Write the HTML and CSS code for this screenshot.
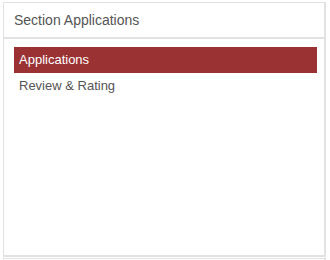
FILE: index.html
```html
<!DOCTYPE html>
<html lang="en">
<head>
  <meta charset="UTF-8">
  <title>Section Applications</title>
  <link rel="stylesheet" href="styles.css">
</head>
<body>
  <div class="panel">
    <div class="panel-heading">Section Applications</div>
    <ul class="nav-list">
      <li class="active">Applications</li>
      <li>Review &amp; Rating</li>
    </ul>
  </div>
  <div class="panel panel-next"></div>
</body>
</html>
```

FILE: styles.css
```css
body {
  margin: 0;
  padding: 2px 4px 0 3px;
  height: 258px;
  overflow: hidden;
  font-family: "Liberation Sans", Arial, sans-serif;
  background-color: #fff;
  color: #555;
}
.panel {
  border: 1px solid #e2e2e2;
  border-width: 1px 2px 2px 1px;
  height: 252px;
}
.panel-heading {
  height: 34px;
  line-height: 35px;
  padding: 0 10px;
  font-size: 14px;
  border-bottom: 2px solid #e2e2e2;
}
.nav-list {
  list-style: none;
  margin: 0;
  padding: 8px 7px 0 10px;
}
.nav-list li {
  height: 26px;
  line-height: 26px;
  padding: 0 5px;
  font-size: 13px;
}
.nav-list li.active {
  background-color: #9a3234;
  color: #fff;
}
.panel-next {
  margin-top: 1px;
}
```
